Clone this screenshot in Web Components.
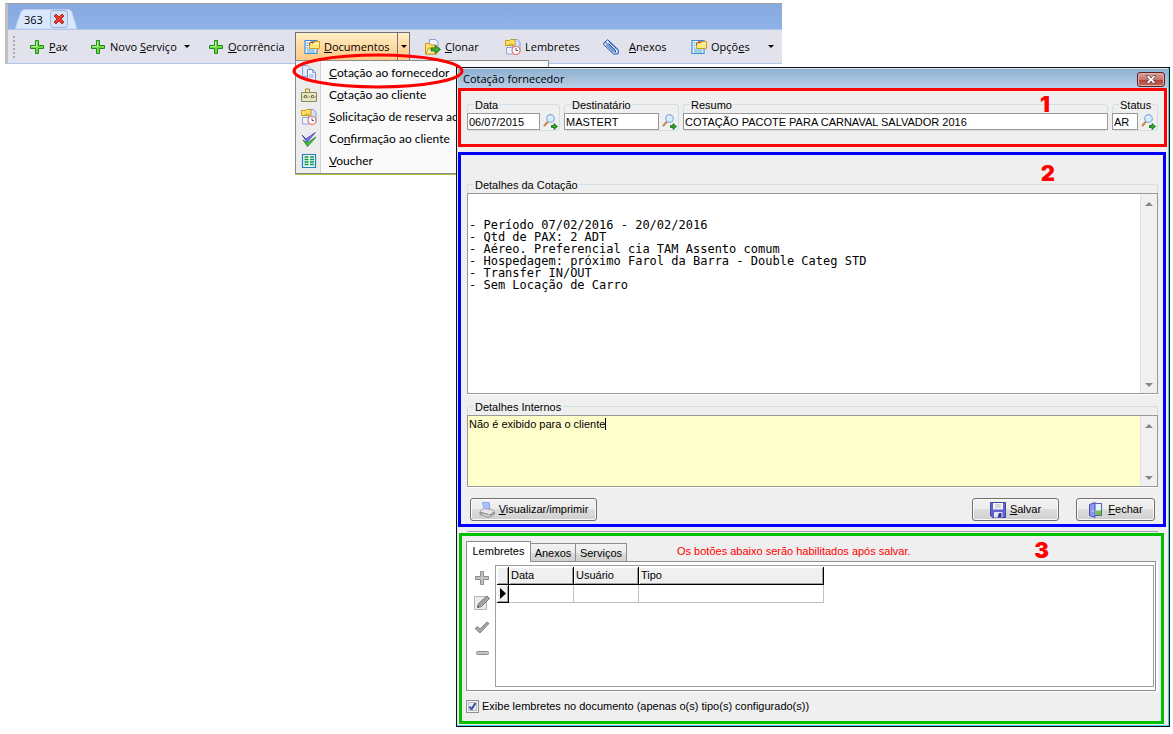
<!DOCTYPE html>
<html lang="pt-BR">
<head>
<meta charset="utf-8">
<title>Cotação fornecedor</title>
<style>
  html, body { margin: 0; background: #fff; }
  body { min-height: 100vh; color: #000; font: 11px/13px "Liberation Sans", Arial, sans-serif; }
</style>
</head>
<body>
<quote-desktop></quote-desktop>

<script>
const ICONS = {
  plus: `<path d="M6.500 1.500h3v5h5v3h-5v5h-3v-5h-5v-3h5z" fill="#6fdc3c" stroke="#1c8a1c"/><path d="M7.500 2.500v5h-5" fill="none" stroke="#c4f5a4"/>`,
  options: `<path d="M1 1.500h12v13h-12z" fill="#f4faff" stroke="#3d8fd6" stroke-width="1.200"/><path d="M2.500 4h2M2.500 6.500h2M2.500 9h2M3 11h8M3 13h8" stroke="#4a9be0"/><path d="M5.500 3.500h4v-1h6v7h-10z" fill="#ffec80" stroke="#d0a020"/><path d="M6.500 4.500h8" stroke="#fff8c8"/><path d="M5.500 6c0-2 1-3 3-3l-1-1.500" fill="none" stroke="#a03a20"/><path d="M8 4.500l3-2" stroke="#c04020"/>`,
  clone: `<path d="M4.500.5h6l2.500 2.500v8h-8.500z" fill="#eef4ff" stroke="#7fa0d4"/><path d="M.5 4.500h4l1 1.500h6v9h-11z" fill="#ffe26b" stroke="#c79a1c"/><path d="M1 15l2.500-6h11l-3 6z" fill="#fff0a0" stroke="#c79a1c"/><path d="M6 9h4v-2.500l5.500 4-5.500 4v-2.500h-4z" fill="#3fae34" stroke="#176b17" stroke-width=".8"/>`,
  reminders: `<path d="M7.500.5h5l2.500 2.500v10h-7.500z" fill="#cfdffc" stroke="#86a2d8"/><path d="M.5 1.500h4l1-1h4.500v6h-9.500z" fill="#ffdf62" stroke="#c99a22"/><path d="M1.500 8.500h7v6.500h-7z" fill="#eef3ff" stroke="#93a8d0"/><path d="M2 7l4-2.500 3 2" fill="none" stroke="#d0a030"/><circle cx="11" cy="11.500" r="4" fill="#fff" stroke="#ea7068" stroke-width="1.200"/><path d="M11 9v2.500h2" fill="none" stroke="#3a5fa8"/>`,
  clip: `<path d="M.8 4l4-3.300 10.400 10v4l-4.400.5-10-9.500z" fill="#eaf3ff" stroke="#1246a8"/><path d="M2.500 3l10 10M5.500 4.500l7 7M3 5.500l8 8M6 2.500l8 8M12.500 11.500v2" fill="none" stroke="#1246a8"/>`,
  copy: `<path d="M1.500.5h5l3 3v8h-8z" fill="#dfeaff" stroke="#86a2d8"/><path d="M6.500 4.500h5l3 3v8h-8z" fill="#f1f6ff" stroke="#6d8cc8"/><path d="M11.500 4.500v3h3M8 10h5M8 12h5" fill="none" stroke="#86a2d8"/>`,
  brief: `<path d="M4.500 5v-3h4v3" fill="#ffe9a0" stroke="#a08a40"/><path d="M.5 5.500h15v9h-15z" fill="#e9e5c0" stroke="#8b8860"/><path d="M1 10h14" stroke="#a5a278"/><path d="M3.500 8.500h2v2h-2zM10.500 8.500h2v2h-2z" fill="#fff" stroke="#77744c"/>`,
  checks: `<path d="M1 4l4 4 9.500-6.500-8.500 9.500z" fill="#7a76f0" stroke="#3a35b0" stroke-width=".8"/><path d="M2 9l4 3 9-6-8.500 9.500z" fill="#45c83c" stroke="#15751a" stroke-width=".8"/>`,
  voucher: `<path d="M1.500 1.500h13v13h-13z" fill="#e4fbf4" stroke="#2b78c0" stroke-width="1.200"/><path d="M3.500 4h4M9 4h4M3.500 6.500h4M9 6.500h4M3.500 9h4M9 9h4M3.500 11.500h4M9 11.500h4" stroke="#17954a" stroke-width="1.400"/>`,
  search: `<path d="M1.500 11.500l4-4.500" stroke="#c8864a" stroke-width="2" stroke-linecap="round"/><circle cx="7.500" cy="4.500" r="3.800" fill="#d4eeff" stroke="#86acdc" stroke-width="1.200"/><path d="M5.500 4c.3-1 1-1.500 2-1.500" fill="none" stroke="#fff"/><path d="M8.500 11.500h2.500v-2l3.500 3-3.500 3v-2h-2.500z" fill="#2fae2a" stroke="#155f15" stroke-width=".8"/>`,
  printer: `<path d="M3.500.5h6.500l1 6h-6z" fill="#a9c4ff" stroke="#8aa6e8"/><path d="M1 9l4-2.500 9 1.500 1.500 2-4.500 3-9.500-2.500z" fill="#e6e6ea" stroke="#aaa"/><path d="M1 10v2.500l8.500 3 6-3.500v-2l-5 3z" fill="#adadb2" stroke="#888" stroke-width=".8"/><path d="M4 12.500l5 1.500 2-1" stroke="#eee" fill="none"/>`,
  save: `<path d="M.5.500h15v15h-13l-2-2z" fill="#5f62cc" stroke="#4446a8"/><path d="M3 1h10v6.500h-10z" fill="#f2f2f2"/><path d="M5 3h6M5 5h6" stroke="#bbb"/><path d="M4 10h8.500v5.500h-8.500z" fill="#e4e6f6"/><path d="M9 11h2.500v4.500h-4z" fill="#34359a"/>`,
  door: `<path d="M6.500 1.500h7v12h-7z" fill="#e4f5ff" stroke="#5a5fa8"/><path d="M8 8.500h5v4.500h-5z" fill="#6cc63c"/><path d="M1.500 2.500l5.500-2v15l-5.500-2z" fill="#8f98f0" stroke="#4a50b8"/><path d="M5 8v1.500" stroke="#fff"/>`,
  grayPlus: `<path d="M6.500 1.500h3v5h5v3h-5v5h-3v-5h-5v-3h5z" fill="#c4c4c4" stroke="#8c8c8c"/>`,
  edit: `<path d="M.5 1.500h12v13h-12z" fill="#ececec" stroke="#b4b4b4"/><path d="M3.500 12.500l1-4 8.500-7.500 2.500 2.500-8 8z" fill="#a4a4a4" stroke="#777"/><path d="M3.500 12.500l.5-2 1.500 1.500z" fill="#444"/>`,
  grayCheck: `<path d="M1 8.500l2.500-2 2.500 2.500 7-7 2 1.500-9 9.500z" fill="#a5a5a5" stroke="#858585"/>`,
  grayMinus: `<rect x="2.500" y="6.500" width="12" height="3" rx="1" fill="#c4c4c4" stroke="#8c8c8c"/>`
};

const define = (name, html, setup) => {
  const template = document.createElement('template');
  template.innerHTML = html;
  customElements.define(name, class extends HTMLElement {
    constructor() {
      super();
      this.attachShadow({ mode: 'open' }).append(template.content.cloneNode(true));
    }
    connectedCallback() { if (setup) setup(this, this.shadowRoot); }
  });
};

customElements.define('ui-icon', class extends HTMLElement {
  static observedAttributes = ['name'];
  constructor() {
    super();
    this.attachShadow({ mode: 'open' }).innerHTML = `
      <style>
        :host { display: block; flex: none; width: 16px; height: 16px; }
        svg { display: block; width: 100%; height: 100%; }
      </style>
      <svg viewBox="0 0 16 16" aria-hidden="true"></svg>`;
  }
  attributeChangedCallback(attr, old, value) {
    this.shadowRoot.querySelector('svg').innerHTML = ICONS[value] || '';
  }
});

const passIcon = (host, root) => root.querySelector('ui-icon').setAttribute('name', host.getAttribute('icon'));

define('tool-button', `
  <style>
    :host { display: flex; flex: none; width: var(--w); height: 30px; }
    button { flex: none; display: flex; align-items: center; gap: 4px; padding: 0; border: 0; background: none; font: inherit; color: inherit; }
    .more { display: none; width: 12px; justify-content: center; }
    .more::before { content: ""; border: 3px solid transparent; border-top-color: #000; border-bottom: 0; }
    :host([menu]) { justify-content: space-between; }
    :host([menu]) .more { display: flex; }
    :host([active]) { box-sizing: border-box; border: 1px solid #6f6f80; background: linear-gradient(#fff0c8, #ffd9a0 50%, #ffc888); }
    :host([active]) .main { padding-left: 8px; }
    :host([active]) .more { border-left: 1px solid #6f6f80; }
    :host([wide]) .main { gap: 10px; }
  </style>
  <button class="main"><ui-icon></ui-icon><span><slot></slot></span></button>
  <button class="more" aria-label="Mais"></button>`, passIcon);

define('menu-entry', `
  <style>
    :host { display: block; }
    button { display: flex; align-items: center; width: 100%; height: 22px; padding: 0 0 0 5px; gap: 12px; border: 0; background: none; font: inherit; color: inherit; white-space: nowrap; }
  </style>
  <button role="menuitem"><ui-icon></ui-icon><span><slot></slot></span></button>`, passIcon);

define('app-window', `
  <style>
    :host { display: block; margin: 3px 391px 0 5px; border-top: 1px solid #a0a0a0; border-left: 3px solid #c0c0c0; font: 11px/15px "Open Sans", "Noto Sans", sans-serif; }
    .tabs { display: flex; align-items: flex-end; height: 25px; padding-left: 7px; background: linear-gradient(#87a9e0, #8fb2e8); }
    .tab { position: relative; display: flex; align-items: center; gap: 7px; height: 20px; padding: 0 9px; }
    .tab > svg { position: absolute; inset: 0; width: 100%; height: 100%; }
    .tab span, .tab button { position: relative; }
    .close { display: grid; place-items: center; width: 18px; height: 18px; padding: 0; border: 1px solid #9db4dc; border-radius: 3px; background: #d4e2f8; }
    .close svg { width: 12px; height: 12px; }
    .tools { display: flex; align-items: center; height: 35px; box-sizing: border-box; border: 1px solid #adc6ea; border-width: 1px 0; background: #e2e2ec; padding-left: 5px; white-space: nowrap; }
    .grip { width: 2px; height: 22px; margin-right: 14px; background: repeating-linear-gradient(#aaaab4 0 2px, transparent 2px 4px); }
    .gap { margin-right: 15px; }
  </style>
  <div class="tabs">
    <div class="tab">
      <svg viewBox="0 0 62 20" preserveAspectRatio="none"><path d="M0 20L6 3q1-2.500 4-2.500h43q3 0 4 2.500l5 17z" fill="#dbe8fb" stroke="#b9cdf0"/></svg>
      <span>363</span>
      <button class="close" aria-label="Fechar aba"><svg viewBox="0 0 12 12"><path d="M1 3l2-2 3 3 3-3 2 2-3 3 3 3-2 2-3-3-3 3-2-2 3-3z" fill="#f03a2a" stroke="#a01810" stroke-width=".8"/></svg></button>
    </div>
  </div>
  <nav class="tools">
    <span class="grip"></span>
    <tool-button icon="plus" style="--w:61px"><u>P</u>ax</tool-button>
    <tool-button icon="plus" menu style="--w:103px" class="gap">Novo <u>S</u>erviço</tool-button>
    <tool-button icon="plus" style="--w:87px"><u>O</u>corrência</tool-button>
    <tool-button icon="options" menu active style="--w:115px" class="gap"><u>D</u>ocumentos</tool-button>
    <tool-button icon="clone" style="--w:80px"><u>C</u>lonar</tool-button>
    <tool-button icon="reminders" style="--w:98px">Lembretes</tool-button>
    <tool-button icon="clip" wide style="--w:88px"><u>A</u>nexos</tool-button>
    <tool-button icon="options" menu style="--w:86px">Opçõ<u>e</u>s</tool-button>
  </nav>`);

define('drop-menu', `
  <style>
    :host { display: block; box-sizing: border-box; padding: 1px 0; border: 1px solid #8a8a8a; box-shadow: 0 1px #a4c43c;
      background: linear-gradient(90deg, #ececec 24px, #d0d0d0 24px 25px, #fafafa 25px); font: 12px/16px Lato, "Open Sans", sans-serif; }
  </style>
  <menu-entry icon="copy"><u>C</u>otação ao fornecedor</menu-entry>
  <menu-entry icon="brief">C<u>o</u>tação ao cliente</menu-entry>
  <menu-entry icon="reminders"><u>S</u>olicitação de reserva ao fornecedor</menu-entry>
  <menu-entry icon="checks">Co<u>n</u>firmação ao cliente</menu-entry>
  <menu-entry icon="voucher"><u>V</u>oucher</menu-entry>`);

define('field-box', `
  <style>
    :host { display: block; min-width: 0; }
    fieldset { min-width: 0; margin: 0; padding: 0; border: 1px solid #d3dde4; border-radius: 3px; }
    legend { margin-left: 6px; padding: 0 1px; height: 13px; line-height: 15px; }
    .row { display: flex; align-items: center; margin: 2px 0 0 -1px; gap: 3px; }
    input { flex: 1; min-width: 0; box-sizing: border-box; height: 17px; margin: 0; padding: 0 1px; border: 1px solid #999; background: #fff; font: inherit; color: inherit; border-radius: 0; }
    button { flex: none; padding: 0; border: 0; background: none; width: 16px; height: 16px; }
    :host(:not([lookup])) button { display: none; }
    :host(:not([lookup])) .row { margin-right: -1px; }
  </style>
  <fieldset>
    <legend><label for="f"></label></legend>
    <div class="row"><input id="f"><button aria-label="Pesquisar"><ui-icon name="search"></ui-icon></button></div>
  </fieldset>`,
  (host, root) => {
    root.querySelector('label').textContent = host.getAttribute('label');
    root.querySelector('input').value = host.getAttribute('value');
  });

define('text-box', `
  <style>
    :host { display: block; }
    fieldset { min-width: 0; margin: 0; padding: 0; border: 1px solid #d3dde4; border-bottom: 0; border-radius: 3px 3px 0 0; }
    legend { margin-left: 5px; padding: 0 2px; height: 13px; line-height: 15px; }
    .row { position: relative; display: flex; box-sizing: border-box; height: var(--h); margin: 2px -1px 0; border: 1px solid #999; background: var(--bg, #fff); box-shadow: 0 1px #fff; }
    textarea { flex: 1; min-width: 0; margin: 0; padding: 1px 1px 0; border: 0; outline: 0; resize: none; overflow: hidden; background: none; color: inherit; font: var(--font, inherit); }
    .bar { display: flex; flex-direction: column; justify-content: space-between; align-items: center; width: 17px; padding: 8px 0 6px; box-sizing: border-box; background: #f0f0f0; border-left: 1px solid #e2e2e2; }
    .bar i { border: 4px solid transparent; border-top: 0; border-bottom-color: #888; }
    .bar i + i { border: 4px solid transparent; border-bottom: 0; border-top-color: #888; }
    .caret { display: none; position: absolute; left: 137px; top: 2px; width: 1px; height: 12px; background: #000; }
    :host([caret]) .caret { display: block; }
  </style>
  <fieldset>
    <legend><label for="t"></label></legend>
    <div class="row"><textarea id="t" spellcheck="false"></textarea><span class="caret"></span><div class="bar"><i></i><i></i></div></div>
  </fieldset>`,
  (host, root) => {
    root.querySelector('label').textContent = host.getAttribute('label');
    root.querySelector('textarea').value = host.getAttribute('value');
  });

define('push-button', `
  <style>
    :host { display: block; }
    button { display: flex; align-items: center; justify-content: center; gap: 4px; width: var(--w); height: 23px; padding: 0; border: 1px solid #707070; border-radius: 3px; background: linear-gradient(#f2f2f2, #ebebeb 50%, #dddddd 50%, #cfcfcf); box-shadow: inset 0 0 0 1px #fafafa; font: inherit; color: inherit; white-space: nowrap; }
  </style>
  <button><ui-icon></ui-icon><span><slot></slot></span></button>`, passIcon);

define('marked-area', `
  <style>
    :host { display: block; position: relative; box-sizing: border-box; border: 3px solid var(--mark); }
    b { position: absolute; top: var(--t); right: var(--r); color: #f00; font: 900 22px/22px Inter, "Liberation Sans", sans-serif; }
  </style>
  <slot></slot><b></b>`,
  (host, root) => { root.querySelector('b').textContent = host.getAttribute('number'); });

define('reminder-tabs', `
  <style>
    :host { display: block; }
    .tabs { display: flex; align-items: flex-end; }
    .tabs button { box-sizing: border-box; width: 45px; height: 18px; margin: 0; padding: 1px 0 0; border: 1px solid #8c8c94; border-left-width: 0; border-bottom: 0; background: linear-gradient(#f2f2f2, #ebebeb 50%, #dcdcdc 50%, #d0d0d0); font: inherit; color: inherit; }
    .tabs button.on { position: relative; width: 65px; height: 21px; padding: 0 0 1px; border-left-width: 1px; margin-bottom: -1px; background: #fff; }
    .tabs button.last { width: 51px; }
    .tabs p { margin: 0 0 3px 50px; color: #f00; }
    .panel { display: flex; box-sizing: border-box; height: 130px; padding: 3px 1px 3px 0; border: 1px solid #8c8c94; background: #fff; box-shadow: 2px 1px #fff; }
    .side { display: flex; flex-direction: column; align-items: center; gap: 9px; width: 28px; padding: 5px 0 0 2px; box-sizing: border-box; }
    .side button { padding: 0; border: 0; background: none; width: 16px; height: 16px; }
    .grid { flex: 1; min-width: 0; padding: 1px; border: 1px solid #a0a0a0; }
    table { border-collapse: separate; border-spacing: 0; table-layout: fixed; width: 327px; }
    th, td { box-sizing: border-box; height: 18px; padding: 0 2px; text-align: left; font-weight: normal; border: 0 solid #c0c0c0; border-width: 0 1px 1px 0; }
    th { background: #f0f0f0; border-color: #000; box-shadow: inset 1px 1px #fff, inset -1px -1px #a0a0a0; }
    tbody th { padding: 0 0 0 3px; }
    th svg { display: block; width: 6px; height: 11px; }
    label { display: flex; align-items: center; gap: 3px; margin-top: 9px; }
    input { appearance: none; width: 13px; height: 13px; margin: 0; border: 1px solid #8e8f8f; box-shadow: inset 0 0 0 1px #f4f4f4, inset 0 0 0 2px #b8bec6;
      background: #e4e9ef url("data:image/svg+xml,%3Csvg xmlns='http://www.w3.org/2000/svg' viewBox='0 0 11 11'%3E%3Cpath d='M2.500 5.500l2 3 4-6.500' fill='none' stroke='%233a52a0' stroke-width='2'/%3E%3C/svg%3E"); }
  </style>
  <div class="tabs">
    <button class="on">Lembretes</button><button>Anexos</button><button class="last">Serviços</button>
    <p>Os botões abaixo serão habilitados após salvar.</p>
  </div>
  <div class="panel">
    <div class="side">
      <button aria-label="Adicionar"><ui-icon name="grayPlus"></ui-icon></button>
      <button aria-label="Editar"><ui-icon name="edit"></ui-icon></button>
      <button aria-label="Confirmar"><ui-icon name="grayCheck"></ui-icon></button>
      <button aria-label="Remover"><ui-icon name="grayMinus"></ui-icon></button>
    </div>
    <div class="grid">
      <table>
        <colgroup><col style="width:12px"><col style="width:65px"><col style="width:65px"><col></colgroup>
        <thead><tr><th></th><th>Data</th><th>Usuário</th><th>Tipo</th></tr></thead>
        <tbody><tr><th><svg viewBox="0 0 6 11"><path d="M0 0l6 5.500L0 11z"/></svg></th><td></td><td></td><td></td></tr></tbody>
      </table>
    </div>
  </div>
  <label><input type="checkbox" checked>Exibe lembretes no documento (apenas o(s) tipo(s) configurado(s))</label>`);

define('quote-dialog', `
  <style>
    :host { display: block; box-sizing: border-box; padding: 0 1px 2px; border: 1px solid #111; background: #efefef; box-shadow: inset -1px -1px #3fd0ea, inset 1px 0 #d6e4f4; }
    header { display: flex; align-items: center; justify-content: space-between; height: 20px; padding: 1px 3px 0 5px; background: linear-gradient(#8eb0d0, #bad0e8); border-top: 1px solid #dbe8f4; box-sizing: border-box; }
    h1 { margin: 0; font: 11px/16px "Open Sans", "Noto Sans", sans-serif; }
    .x { display: grid; place-items: center; box-sizing: border-box; width: 28px; height: 15px; padding: 0; border: 1px solid #5c1f24; border-radius: 3px; background: linear-gradient(#dba49c, #c8756c 50%, #b04038 50%, #c86a58); box-shadow: inset 0 0 0 1px #e0b0a8; }
    .x svg { width: 12px; height: 9px; }
    .one { --mark: #f00; --t: 2px; --r: 114px; height: 59px; margin-right: 1px; padding: 7px 6px 0; }
    .fields { display: flex; gap: 4px; }
    .two { --mark: #00f; --t: 7px; --r: 108px; margin: 5px 2px 0 0; padding: 23px 5px 3px 6px; }
    .three { --mark: #00c000; --t: 3px; --r: 112px; margin: 1px 4px 0 1px; height: 191px; padding: 5px 5px 0 4px; }
    .rule { height: 1px; margin: 4px 10px 0 9px; background: #a0a0a0; }
    .quote { --h: 201px; --font: 12px/12px "DejaVu Sans Mono", "Liberation Mono", monospace; }
    .internal { --h: 72px; --bg: #ffffcc; --font: 11px/15px "Liberation Sans", Arial, sans-serif; margin-top: 6px; }
    .actions { display: flex; align-items: flex-end; margin-top: 11px; padding: 0 3px; }
    .actions > :nth-child(2) { margin: 0 17px 0 auto; }
  </style>
  <header><h1>Cotação fornecedor</h1><button class="x" aria-label="Fechar janela"><svg viewBox="0 0 12 9"><path d="M1 .5h3l2 2.500 2-2.500h3l-3 4 3 4h-3l-2-2.500-2 2.500h-3l3-4z" fill="#fff" stroke="#5a4a50" stroke-width=".8"/></svg></button></header>
  <marked-area class="one" number="1">
    <div class="fields">
      <field-box label="Data" value="06/07/2015" lookup style="width:93px"></field-box>
      <field-box label="Destinatário" value="MASTERT" lookup style="width:115px"></field-box>
      <field-box label="Resumo" value="COTAÇÃO PACOTE PARA CARNAVAL SALVADOR 2016" style="flex:1"></field-box>
      <field-box label="Status" value="AR" lookup style="width:46px"></field-box>
    </div>
  </marked-area>
  <marked-area class="two" number="2">
    <text-box class="quote" label="Detalhes da Cotação" value="&#10;&#10;- Período 07/02/2016 - 20/02/2016&#10;- Qtd de PAX: 2 ADT&#10;- Aéreo. Preferencial cia TAM Assento comum&#10;- Hospedagem: próximo Farol da Barra - Double Categ STD&#10;- Transfer IN/OUT&#10;- Sem Locação de Carro"></text-box>
    <text-box class="internal" label="Detalhes Internos" value="Não é exibido para o cliente" caret></text-box>
    <div class="actions">
      <push-button icon="printer" style="--w:127px"><u>V</u>isualizar/imprimir</push-button>
      <push-button icon="save" style="--w:87px"><u>S</u>alvar</push-button>
      <push-button icon="door" style="--w:79px"><u>F</u>echar</push-button>
    </div>
  </marked-area>
  <div class="rule"></div>
  <marked-area class="three" number="3"><reminder-tabs></reminder-tabs></marked-area>`);

define('quote-desktop', `
  <style>
    :host { display: block; position: relative; min-height: 100vh; overflow: hidden; }
    drop-menu { position: absolute; left: 295px; top: 60px; width: 254px; }
    quote-dialog { position: absolute; left: 456px; right: 3px; top: 67px; }
    .ring { position: absolute; left: 291px; top: 52px; width: 175px; height: 38px; pointer-events: none; }
  </style>
  <app-window></app-window>
  <drop-menu role="menu"></drop-menu>
  <quote-dialog></quote-dialog>
  <svg class="ring" viewBox="0 0 175 38"><ellipse cx="87" cy="19" rx="84" ry="16" fill="none" stroke="#f00" stroke-width="3"/></svg>`);
</script>
</body>
</html>
